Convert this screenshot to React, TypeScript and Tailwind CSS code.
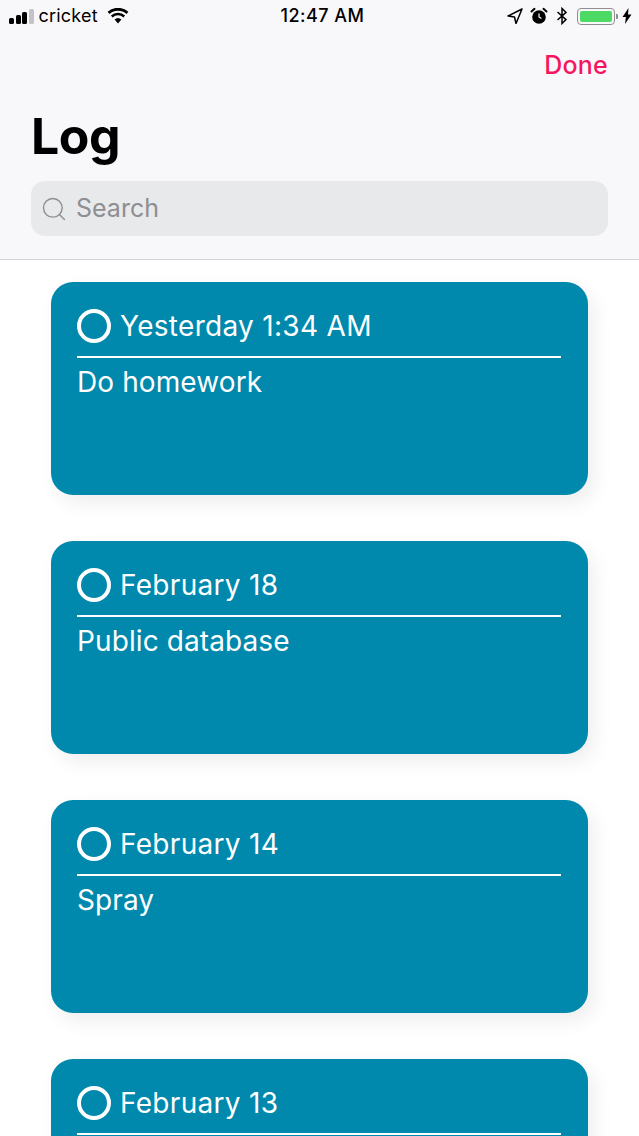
import { Search } from "lucide-react";

const logs = [
  { date: "Yesterday 1:34 AM", title: "Do homework" },
  { date: "February 18", title: "Public database" },
  { date: "February 14", title: "Spray" },
  { date: "February 13", title: "" },
];

function StatusBar() {
  return (
    <div className="flex h-[32px] items-center justify-between pl-[9px] pr-[7px] text-black">
      <div className="flex w-[202px] items-center">
        <div className="flex items-end gap-[1.5px]">
          <div className="h-[6px] w-[5px] rounded-[1.5px] bg-black" />
          <div className="h-[9px] w-[5px] rounded-[1.5px] bg-black" />
          <div className="h-[12px] w-[5px] rounded-[1.5px] bg-black" />
          <div className="h-[15px] w-[5px] rounded-[1.5px] bg-[#c4c4c6]" />
        </div>
        <span className="ml-[5px] text-[18px] leading-none tracking-[0.2px]">cricket</span>
        <svg width="22" height="16" viewBox="0 0 22 16" className="ml-[9px]">
          <path d="M11 15.5 7.6 11.6a5 5 0 0 1 6.8 0z" fill="#000" />
          <path d="M5.6 9.4 3.9 7.5a10.6 10.6 0 0 1 14.2 0l-1.7 1.9a8 8 0 0 0-10.8 0z" fill="#000" />
          <path d="M2.5 5.9.6 3.8a15.6 15.6 0 0 1 20.8 0l-1.9 2.1a12.8 12.8 0 0 0-17 0z" fill="#000" />
        </svg>
      </div>
      <span className="text-[18px] font-medium leading-none tracking-[0.5px]">12:47 AM</span>
      <div className="flex w-[198px] items-center justify-end">
        <svg width="16" height="16" viewBox="0 0 16 16">
          <path d="M15 1 1 8l6.5 1L9 15.5z" fill="none" stroke="#000" strokeWidth="1.5" strokeLinejoin="round" />
        </svg>
        <svg width="18" height="18" viewBox="0 0 18 18" className="ml-[7px]">
          <circle cx="9" cy="10" r="6.8" fill="#000" />
          <path d="M9 6.5V10l2.4 1.6" fill="none" stroke="#fff" strokeWidth="1.2" />
          <path d="M1.5 4.5 4.5 1.8M16.5 4.5l-3-2.7" stroke="#000" strokeWidth="2" strokeLinecap="round" />
        </svg>
        <svg width="12" height="18" viewBox="0 0 12 18" className="ml-[8px]">
          <path d="M1.5 5 10 12.6 6 16.5V1.5L10 5.4 1.5 13" fill="none" stroke="#000" strokeWidth="1.5" />
        </svg>
        <div className="ml-[9px] flex h-[17px] w-[38px] items-center rounded-[4px] border border-[#8e8e90] p-[2px]">
          <div className="h-full w-full rounded-[2px] bg-[#4cd964]" />
        </div>
        <div className="ml-[1px] h-[5px] w-[2px] rounded-r-[1px] bg-[#8e8e90]" />
        <svg width="10" height="16" viewBox="0 0 10 16" className="ml-[4px]">
          <path d="M6.5 0 .5 9h3.4L3 16l6.5-9.5H6z" fill="#000" />
        </svg>
      </div>
    </div>
  );
}

function Header() {
  return (
    <div className="h-[260px] border-b border-[#d4d4d6] bg-[#f8f8fa]">
      <StatusBar />
      <div className="flex justify-end pr-[31px] pt-[17px]">
        <span className="text-[25px] font-medium leading-[32px] tracking-[0.2px] text-[#f6155f]">Done</span>
      </div>
      <h1 className="pl-[31px] pt-[25px] text-[50px] font-bold leading-[60px] tracking-[-0.5px] text-black">Log</h1>
      <div className="mx-[31px] mt-[15px] flex h-[55px] items-center rounded-[14px] bg-[#e8e9eb] pl-[9px]">
        <Search size={28} strokeWidth={1.2} className="text-[#8e8e93]" />
        <span className="ml-[8px] text-[25px] leading-none text-[#8e8e93]">Search</span>
      </div>
    </div>
  );
}

function LogCard({ date, title }: { date: string; title: string }) {
  return (
    <div className="h-[213px] shrink-0 rounded-[22px] bg-[#0088ad] pl-[26px] pr-[27px] pt-[27px] text-white shadow-[6px_8px_20px_rgba(0,0,0,0.07)]">
      <div className="flex h-[49px] items-start border-b-2 border-white">
        <div className="h-[34px] w-[34px] shrink-0 rounded-full border-[4.5px] border-white" />
        <span className="ml-[9px] text-[28px] leading-[34px] tracking-[0.3px]">{date}</span>
      </div>
      <div className="pt-[7px] text-[28px] leading-[34px] tracking-[0.1px]">{title}</div>
    </div>
  );
}

export default function App() {
  return (
    <div className="h-[1136px] w-[639px] overflow-hidden bg-white font-['Inter',sans-serif]">
      <Header />
      <div className="flex flex-col gap-[46px] pl-[51px] pr-[51px] pt-[22px]">
        {logs.map((log) => (
          <LogCard key={log.date} date={log.date} title={log.title} />
        ))}
      </div>
    </div>
  );
}
